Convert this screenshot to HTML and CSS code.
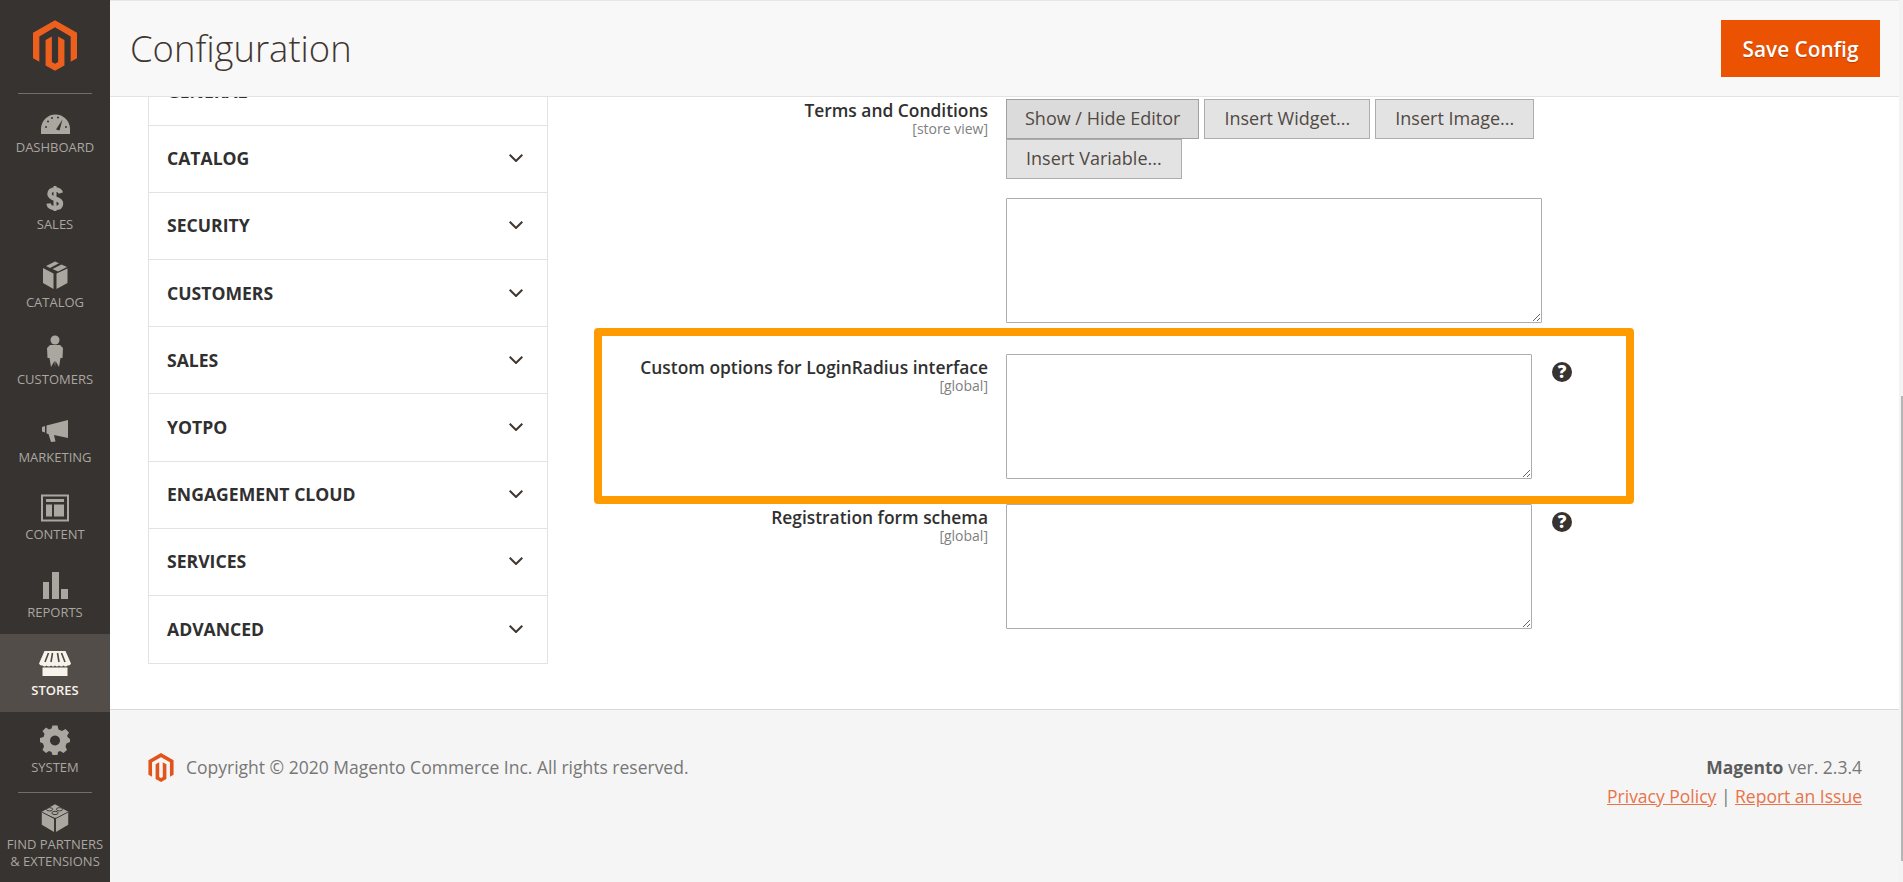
FILE: index.html
```html
<!DOCTYPE html>
<html lang="en">
<head>
<meta charset="utf-8">
<title>Configuration</title>
<link rel="stylesheet" href="styles.css">
</head>
<body>
<aside class="sidebar">
  <div class="brand">
    <svg class="brand-logo" viewBox="0 0 43.8 50.5"><path d="M21.9 0 0 12.6V37.9L6.3 41.5V16.2L21.9 7.2 37.5 16.2V41.5L43.8 37.9V12.6Z"/><path d="M25 41.6 21.9 43.4 18.8 41.6V16.2L12.5 19.8V45.1L21.9 50.5 31.3 45.1V19.8L25 16.2Z"/></svg>
  </div>
  <nav class="nav">
    <a class="nav-item"><svg class="nav-icon" viewBox="0 0 34 34"><path class="fill" d="M3 34V29A14.5 14.5 0 0 1 32 29V34Z"/><g class="cut"><circle cx="8" cy="27" r="1"/><circle cx="10" cy="21.5" r="1"/><circle cx="14" cy="18" r="1"/><circle cx="20" cy="17.5" r="1"/><circle cx="28" cy="27" r="1"/><path d="M24.5 19.5 21.5 30.5 18 29.5Z"/></g></svg><span class="nav-label">Dashboard</span></a>
    <a class="nav-item"><svg class="nav-icon" viewBox="0 0 34 34"><path class="dollar" d="M23 15C22 12.500 19.500 11.500 17 11.500 13.500 11.500 11.500 13.500 11.500 16 11.500 22 23 19.500 23 25.500 23 28.500 20.500 30 17 30 13.500 30 11 28.500 10.500 25.500"/><path class="fill" d="M15.500 8H18.500V33H15.500Z"/></svg><span class="nav-label">Sales</span></a>
    <a class="nav-item"><svg class="nav-icon" viewBox="0 0 34 34"><path class="fill" d="M17 6.5 21 8.3 12 13 8 11ZM23.5 9.5 29 12 20 16.5 14.5 14ZM5 13 15.5 18.5V34L5 28ZM29.500 13.500V28L18.500 34V18.500Z"/></svg><span class="nav-label">Catalog</span></a>
    <a class="nav-item"><svg class="nav-icon" viewBox="0 0 34 34"><circle class="fill" cx="17" cy="7" r="4.500"/><path class="fill" d="M12 12H22L25 15 24.500 25 22.500 25 21 34 17.500 28 17 34 16.500 28 13 34 11.500 25 9.500 25 9 15Z"/></svg><span class="nav-label">Customers</span></a>
    <a class="nav-item"><svg class="nav-icon" viewBox="0 0 34 34"><path class="fill" d="M4 17 7 16V22.500L4 21.500ZM8.500 15.500 30 10V28L16 25 17.500 31.500 13 32 10.500 24 8.500 23.500Z"/></svg><span class="nav-label">Marketing</span></a>
    <a class="nav-item"><svg class="nav-icon" viewBox="0 0 34 34"><path class="fill" fill-rule="evenodd" d="M3 6.500H31V33.500H3ZM5 8.500V31.500H29V8.500ZM8 11H26V14H8ZM8 16.500H14V28.500H8ZM16 16.500H26V28.500H16Z"/></svg><span class="nav-label">Content</span></a>
    <a class="nav-item"><svg class="nav-icon" viewBox="0 0 34 34"><path class="fill" d="M5 16H11V33H5ZM14 6H21V33H14ZM23 23H30V33H23Z"/></svg><span class="nav-label">Reports</span></a>
    <a class="nav-item is-active"><svg class="nav-icon" viewBox="0 0 34 34"><path class="fill" d="M6.500 8H27.500L33 20.500A3 3 0 0 1 29.500 22.500 3 3 0 0 1 25.500 22.500 3 3 0 0 1 21 22.500 3 3 0 0 1 17 22.500 3 3 0 0 1 13 22.500 3 3 0 0 1 8.500 22.500 3 3 0 0 1 4.500 22.500 3 3 0 0 1 1 20.500ZM4.500 24.500H29.500V33H4.500Z"/><g class="cut-bar"><path d="M10.500 10 7 19M14.500 10 13 19M19.500 10 21 19M23.500 10 27 19"/></g></svg><span class="nav-label">Stores</span></a>
    <a class="nav-item"><svg class="nav-icon" viewBox="0 0 34 34"><path class="fill" fill-rule="evenodd" d="M14.500 4.500H19.500L20.500 8.500 24 10 27.500 8 31 11.500 29 15 30.500 17 32 18V21L28.500 22.500 27.500 25.500 29 29 25.500 32 22 30 20 31 19.500 34H14.500L13.500 31 11 30 8 32 4.500 29 6 25.500 5 22.500 2 21V17L5.500 16 6.500 13 4.500 10 8 6.500 11 8.500 13.500 7.500ZM17 14.500A5 5 0 1 0 17.001 14.500Z"/></svg><span class="nav-label">System</span></a>
    <a class="nav-item nav-item-last"><svg class="nav-icon" viewBox="0 0 34 34"><path class="fill" d="M17 3.500 31.500 11V25L18 33V18.500ZM16 33 2.500 25V11L17 18.500 16 18.500Z"/><path class="fill" d="M17 2.500 32 11 17 17.500 2 11Z"/><g class="cut-bar thin"><path d="M2.500 11 17 18.500 31.500 11M17 18.500V33"/><ellipse cx="11" cy="8" rx="3.500" ry="1.800"/><ellipse cx="22" cy="8" rx="3.500" ry="1.800"/><ellipse cx="17" cy="12" rx="3.500" ry="1.800"/></g></svg><span class="nav-label">Find Partners<br>&amp; Extensions</span></a>
  </nav>
</aside>

<main class="page">
  <header class="page-head">
    <h1 class="page-title">Configuration</h1>
    <button class="btn-primary" type="button">Save Config</button>
  </header>

  <div class="content">
    <ul class="tabs">
      <li class="tab">GENERAL<svg class="chev-blank" viewBox="0 0 14 8"></svg></li>
      <li class="tab">CATALOG<svg class="chev" viewBox="0 0 14 8"><path d="M.7.7 7 7 13.300.7"/></svg></li>
      <li class="tab">SECURITY<svg class="chev" viewBox="0 0 14 8"><path d="M.7.7 7 7 13.300.7"/></svg></li>
      <li class="tab">CUSTOMERS<svg class="chev" viewBox="0 0 14 8"><path d="M.7.7 7 7 13.300.7"/></svg></li>
      <li class="tab">SALES<svg class="chev" viewBox="0 0 14 8"><path d="M.7.7 7 7 13.300.7"/></svg></li>
      <li class="tab">YOTPO<svg class="chev" viewBox="0 0 14 8"><path d="M.7.7 7 7 13.300.7"/></svg></li>
      <li class="tab">ENGAGEMENT CLOUD<svg class="chev" viewBox="0 0 14 8"><path d="M.7.7 7 7 13.300.7"/></svg></li>
      <li class="tab">SERVICES<svg class="chev" viewBox="0 0 14 8"><path d="M.7.7 7 7 13.300.7"/></svg></li>
      <li class="tab">ADVANCED<svg class="chev" viewBox="0 0 14 8"><path d="M.7.7 7 7 13.300.7"/></svg></li>
    </ul>

    <form class="form">
      <div class="row row-wide row-first">
        <div class="label"><div class="label-text">Terms and Conditions</div><div class="scope">[store view]</div></div>
        <div class="control">
          <div class="btn-set">
            <button class="btn is-hover" type="button">Show / Hide Editor</button>
            <button class="btn" type="button">Insert Widget...</button>
            <button class="btn" type="button">Insert Image...</button>
            <button class="btn" type="button">Insert Variable...</button>
          </div>
          <textarea class="area"></textarea>
        </div>
      </div>

      <div class="highlight">
        <div class="row">
          <div class="label"><div class="label-text">Custom options for LoginRadius interface</div><div class="scope">[global]</div></div>
          <div class="control"><textarea class="area"></textarea></div>
          <span class="help">?</span>
        </div>
      </div>

      <div class="row row-plain">
        <div class="label"><div class="label-text">Registration form schema</div><div class="scope">[global]</div></div>
        <div class="control"><textarea class="area"></textarea></div>
        <span class="help">?</span>
      </div>
    </form>
  </div>

  <footer class="foot">
    <div class="foot-left">
      <svg class="foot-logo" viewBox="0 0 43.8 50.5"><path d="M21.9 0 0 12.6V37.9L6.3 41.5V16.2L21.9 7.2 37.5 16.2V41.5L43.8 37.9V12.6Z"/><path d="M25 41.6 21.9 43.4 18.8 41.6V16.2L12.5 19.8V45.1L21.9 50.5 31.3 45.1V19.8L25 16.2Z"/></svg>
      <span>Copyright © 2020 Magento Commerce Inc. All rights reserved.</span>
    </div>
    <div class="foot-right">
      <div><strong class="foot-strong">Magento</strong> ver. 2.3.4</div>
      <div><a class="foot-link">Privacy Policy</a> <span class="foot-sep">|</span> <a class="foot-link">Report an Issue</a></div>
    </div>
  </footer>
</main>

<div class="scrollbar"><div class="scrollbar-thumb"></div></div>
</body>
</html>
```
FILE: styles.css
```css
* { box-sizing: border-box; }
html, body { margin: 0; height: 100%; }
body {
  display: flex;
  height: 882px;
  overflow: hidden;
  background: #fff;
  font-family: "Open Sans", sans-serif;
  color: #303030;
}

/* sidebar */
.sidebar { width: 110px; flex: none; background: #373330; display: flex; flex-direction: column; }
.brand { height: 94px; flex: none; margin: 0 18px; padding-top: 20px; border-bottom: 1px solid #736e69; display: flex; justify-content: center; align-items: flex-start; }
.brand-logo { width: 44px; height: 51px; fill: #ec5f1c; flex: none; }
.nav { margin-top: -3px; display: flex; flex-direction: column; }
.nav-item { height: 77.6px; flex: none; padding-top: 9px; display: flex; flex-direction: column; align-items: center; color: #aaa6a0; }
.nav-icon { width: 34px; height: 34px; flex: none; }
.fill { fill: #aaa6a0; }
.dollar { fill: none; stroke: #aaa6a0; stroke-width: 4.500; }
.cut { fill: #373330; }
.cut-bar { fill: none; stroke: #4e4944; stroke-width: 1.6; }
.cut-bar.thin { stroke: #373330; stroke-width: 1; }
.nav-label { margin-top: 4.500px; font-size: 13px; line-height: 17px; text-transform: uppercase; text-align: center; white-space: nowrap; }
.is-active { background: #524d49; color: #f7f3eb; }
.is-active .fill { fill: #f7f3eb; }
.is-active .nav-label { font-weight: 600; }
.nav-item-last { height: auto; margin-top: 2.400px; padding-top: 10px; position: relative; }
.nav-item-last .nav-icon { height: 31px; }
.nav-item-last .nav-label { margin-top: 3px; }
.nav-item-last::before { content: ""; position: absolute; left: 18px; right: 18px; top: 0; height: 1px; background: #736e69; }

/* page */
.page { width: 1789px; flex: none; display: flex; flex-direction: column; }
.page-head { position: relative; z-index: 2; height: 97px; flex: none; background: #f8f8f8; border-top: 1px solid #e6e6e6; border-bottom: 1px solid #e3e3e3; padding: 19px 19px 0 20px; display: flex; justify-content: space-between; align-items: flex-start; }
.page-title { margin: 4px 0 0; font-size: 36.400px; line-height: 48px; font-weight: 300; color: #41362f; }
.btn-primary { width: 159px; height: 57px; padding-bottom: 1px; border: 0; background: #eb5202; color: #fff; font: 600 20.800px "Open Sans", sans-serif; text-shadow: 0 1px 1px rgba(0,0,0,.25); }

.content { flex: 1; min-height: 0; display: flex; align-items: flex-start; }

/* tabs */
.tabs { width: 400px; flex: none; margin: -38.500px 0 0 38px; padding: 0; list-style: none; border: 1px solid #e3e3e3; border-top: 0; }
.tab { height: 67.200px; padding: 0 24px 1px 18px; display: flex; justify-content: space-between; align-items: center; border-bottom: 1px solid #e3e3e3; font-size: 17.600px; font-weight: 700; color: #303030; }
.tab:last-child { border-bottom: 0; }
.chev { width: 14px; height: 8px; flex: none; fill: none; stroke: #41362f; stroke-width: 2; }
.chev-blank { width: 14px; height: 8px; flex: none; }

/* form */
.form { margin-left: 46px; width: 1040px; }
.row { display: grid; grid-template-columns: 386px 526px 20px; column-gap: 18px; }
.row-plain { padding-left: 8px; }
.row-wide { grid-template-columns: 386px 536px; padding-left: 8px; margin-top: 2px; }
.row-first .label { padding-top: 0; }
.label { text-align: right; padding-top: 2px; }
.label-text { font-size: 17.400px; font-weight: 600; line-height: 22px; color: #303030; }
.scope { font-size: 14px; line-height: 17px; margin-top: -1px; color: #808080; }
.btn-set { width: 536px; display: flex; flex-wrap: wrap; column-gap: 5px; margin-bottom: 19px; }
.btn { height: 40px; padding: 0 19px 2px; border: 1px solid #adadad; background: #e3e3e3; color: #514943; font: 400 18px "Open Sans", sans-serif; white-space: nowrap; }
.is-hover { padding: 0 18px 2px; background: #dbdbdb; border-color: #a0a0a0; }
.area { display: block; width: 100%; height: 125px; margin: 0; padding: 8px; border: 1px solid #adadad; border-radius: 1px; background: #fff; }
.highlight { margin-top: 5px; padding: 18px 0 17px; border: 8px solid #ff9b00; border-radius: 4px; }
.help { margin: 8px 0 0 2px; width: 20px; height: 20px; border-radius: 50%; background: #373330; color: #fff; font-size: 17px; font-weight: 800; line-height: 20px; text-align: center; }

/* footer */
.foot { height: 173px; flex: none; background: #f5f5f5; border-top: 1px solid #d9d9d9; padding: 43px 37px 0 38px; display: flex; justify-content: space-between; align-items: flex-start; font-size: 17.500px; line-height: 28.500px; color: #777; }
.foot-left { display: flex; align-items: center; gap: 12px; }
.foot-logo { width: 26px; height: 29px; fill: #e2551a; flex: none; }
.foot-right { text-align: right; }
.foot-strong { font-weight: 700; color: #5c5c5c; }
.foot-link { color: #e8734a; text-decoration: underline; }
.foot-sep { color: #777; }

/* scrollbar */
.scrollbar { width: 4px; flex: none; background: #f3f3f3; position: relative; }
.scrollbar-thumb { position: absolute; top: 396px; left: 2px; right: 0; height: 465px; background: #b5b5b5; }
```
